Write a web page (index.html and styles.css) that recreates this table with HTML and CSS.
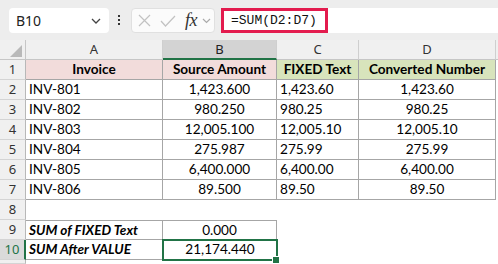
FILE: index.html
```html
<!DOCTYPE html>
<html>
<head>
<meta charset="utf-8">
<link rel="stylesheet" href="styles.css">
</head>
<body>
<div class="toolbar">
  <div class="namebox">
    <span class="nb-text">B10</span>
    <svg class="chev" width="10" height="6" viewBox="0 0 10 6"><path d="M1 1 L5 5 L9 1" fill="none" stroke="#444" stroke-width="1.3"/></svg>
  </div>
  <div class="dots"><i></i><i></i><i></i></div>
  <div class="fxbox">
    <svg class="ico-x" width="13" height="13" viewBox="0 0 13 13"><path d="M1 1 L12 12 M12 1 L1 12" stroke="#c2c2c2" stroke-width="1.2" fill="none"/></svg>
    <svg class="ico-check" width="16" height="12" viewBox="0 0 16 12"><path d="M1 6 L5.5 11 L15 1" stroke="#c2c2c2" stroke-width="1.2" fill="none"/></svg>
    <span class="fx">fx</span>
    <svg class="chev2" width="9" height="6" viewBox="0 0 9 6"><path d="M1 1 L4.5 4.5 L8 1" fill="none" stroke="#aaa" stroke-width="1.2"/></svg>
  </div>
  <div class="formula"><span class="ftext">=SUM(D2:D7)</span></div>
</div>
<div class="sheet">
  <div class="corner"><span class="tri"></span></div>
  <div class="ch">A</div>
  <div class="ch sel">B</div>
  <div class="ch">C</div>
  <div class="ch">D</div>
  <div class="ch end"></div>

  <div class="rh">1</div>
  <div class="c b hd pink">Invoice</div>
  <div class="c b hd pink">Source Amount</div>
  <div class="c b hd green">FIXED Text</div>
  <div class="c b hd green">Converted Number</div>
  <div class="c"></div>

  <div class="rh">2</div>
  <div class="c b l">INV-801</div>
  <div class="c b m">1,423.600</div>
  <div class="c b l">1,423.60</div>
  <div class="c b m">1,423.60</div>
  <div class="c"></div>

  <div class="rh">3</div>
  <div class="c b l">INV-802</div>
  <div class="c b m">980.250</div>
  <div class="c b l">980.25</div>
  <div class="c b m">980.25</div>
  <div class="c"></div>

  <div class="rh">4</div>
  <div class="c b l">INV-803</div>
  <div class="c b m">12,005.100</div>
  <div class="c b l">12,005.10</div>
  <div class="c b m">12,005.10</div>
  <div class="c"></div>

  <div class="rh">5</div>
  <div class="c b l">INV-804</div>
  <div class="c b m">275.987</div>
  <div class="c b l">275.99</div>
  <div class="c b m">275.99</div>
  <div class="c"></div>

  <div class="rh">6</div>
  <div class="c b l">INV-805</div>
  <div class="c b m">6,400.000</div>
  <div class="c b l">6,400.00</div>
  <div class="c b m">6,400.00</div>
  <div class="c"></div>

  <div class="rh">7</div>
  <div class="c b l">INV-806</div>
  <div class="c b m">89.500</div>
  <div class="c b l">89.50</div>
  <div class="c b m">89.50</div>
  <div class="c"></div>

  <div class="rh">8</div>
  <div class="c"></div>
  <div class="c"></div>
  <div class="c"></div>
  <div class="c"></div>
  <div class="c"></div>

  <div class="rh">9</div>
  <div class="c b t l bi">SUM of FIXED Text</div>
  <div class="c b t m">0.000</div>
  <div class="c"></div>
  <div class="c"></div>
  <div class="c"></div>

  <div class="rh rsel">10</div>
  <div class="c b l bi">SUM After VALUE</div>
  <div class="c m active">21,174.440</div>
  <div class="c"></div>
  <div class="c"></div>
  <div class="c"></div>

  <div class="rh"></div>
  <div class="c"></div>
  <div class="c"></div>
  <div class="c"></div>
  <div class="c"></div>
  <div class="c"></div>
</div>
</body>
</html>
```
FILE: styles.css
```css
* { box-sizing: border-box; }
html, body { margin: 0; padding: 0; }
body {
  width: 498px;
  height: 264px;
  overflow: hidden;
  background: #fff;
  font-family: Lato, "Liberation Sans", sans-serif;
}
.toolbar {
  height: 40px;
  background: #ededed;
  display: flex;
  align-items: flex-start;
  padding: 8px 0 0 9px;
}
.namebox {
  width: 100px;
  height: 25px;
  background: #fff;
  border-radius: 4px;
  display: flex;
  align-items: center;
  justify-content: space-between;
  padding: 0 8px 0 7px;
  font-family: "Noto Sans", "Open Sans", sans-serif;
  font-size: 14px;
  color: #222;
}
.chev { margin-top: 1px; }
.dots {
  width: 3px;
  margin: 7px 0 0 9px;
  display: flex;
  flex-direction: column;
  gap: 2px;
}
.dots i {
  display: block;
  width: 2px;
  height: 2px;
  background: #333;
}
.fxbox {
  margin-left: 10px;
  width: 84px;
  height: 25px;
  background: #fbfbfb;
  border: 1px solid #e0e0e0;
  border-radius: 4px;
  display: flex;
  align-items: center;
  padding-left: 6px;
}
.ico-check { margin-left: 9px; }
.fx {
  margin-left: 9px;
  font-family: "Liberation Serif", serif;
  font-style: italic;
  font-size: 18px;
  color: #333;
  letter-spacing: -0.5px;
}
.chev2 { margin-left: 5px; }
.formula {
  margin-left: 6px;
  flex: 1;
  height: 25px;
  background: #fff;
  border-radius: 4px 0 0 4px;
}
.ftext {
  display: flex;
  align-items: center;
  width: 107px;
  height: 25px;
  border: 3px solid #e31b4e;
  padding-left: 7px;
  font-family: "Liberation Mono", monospace;
  font-size: 13px;
  color: #111;
}
.sheet {
  display: grid;
  grid-template-columns: 26px 137px 114px 82px 137px 2px;
  grid-template-rows: repeat(11, 20px) 4px;
  font-size: 13.6px;
  color: #000;
}
.corner {
  background: #f0f0f0;
  border-right: 1px solid #c6c6c6;
  border-bottom: 1px solid #c6c6c6;
  position: relative;
}
.tri {
  position: absolute;
  right: 3px;
  bottom: 2px;
  width: 0;
  height: 0;
  border-left: 12px solid transparent;
  border-bottom: 12px solid #b9b9b9;
}
.ch {
  background: #f0f0f0;
  border-right: 1px solid #cfcfcf;
  border-bottom: 1px solid #c6c6c6;
  text-align: center;
  line-height: 19px;
  font-family: "Noto Sans", "Open Sans", sans-serif;
  font-size: 13px;
  color: #333;
}
.ch.sel {
  background: #d3d3d3;
  border-bottom: 2px solid #217346;
  color: #222;
}
.ch.end { border-right: none; }
.rh {
  background: #f0f0f0;
  border-right: 1px solid #b8b8b8;
  border-bottom: 1px solid #d4d4d4;
  text-align: center;
  line-height: 19px;
  font-family: "Noto Sans", "Open Sans", sans-serif;
  font-size: 13px;
  color: #333;
  overflow: hidden;
}
.rh.rsel {
  background: #dadada;
  color: #217346;
  border-right: 2px solid #217346;
}
.c {
  line-height: 19px;
  white-space: nowrap;
  overflow: visible;
  padding: 0 3px;
}
.c.b {
  border-right: 1px solid #a6a6a6;
  border-bottom: 1px solid #a6a6a6;
}
.c.t { border-top: 1px solid #a6a6a6; line-height: 18px; }
.hd { font-weight: 700; text-align: center; }
.pink { background: #f2dcdb; }
.green { background: #d8e4bc; }
.l { text-align: left; }
.m { text-align: center; }
.bi { font-weight: 700; font-style: italic; }
.active { position: relative; }
.active::after {
  content: "";
  position: absolute;
  left: -1px;
  top: -1px;
  right: -1px;
  bottom: -1px;
  border: 2px solid #217346;
}
.active::before {
  content: "";
  position: absolute;
  right: -3px;
  bottom: -4px;
  width: 6px;
  height: 6px;
  background: #217346;
  border: 1px solid #fff;
  z-index: 2;
}
```
